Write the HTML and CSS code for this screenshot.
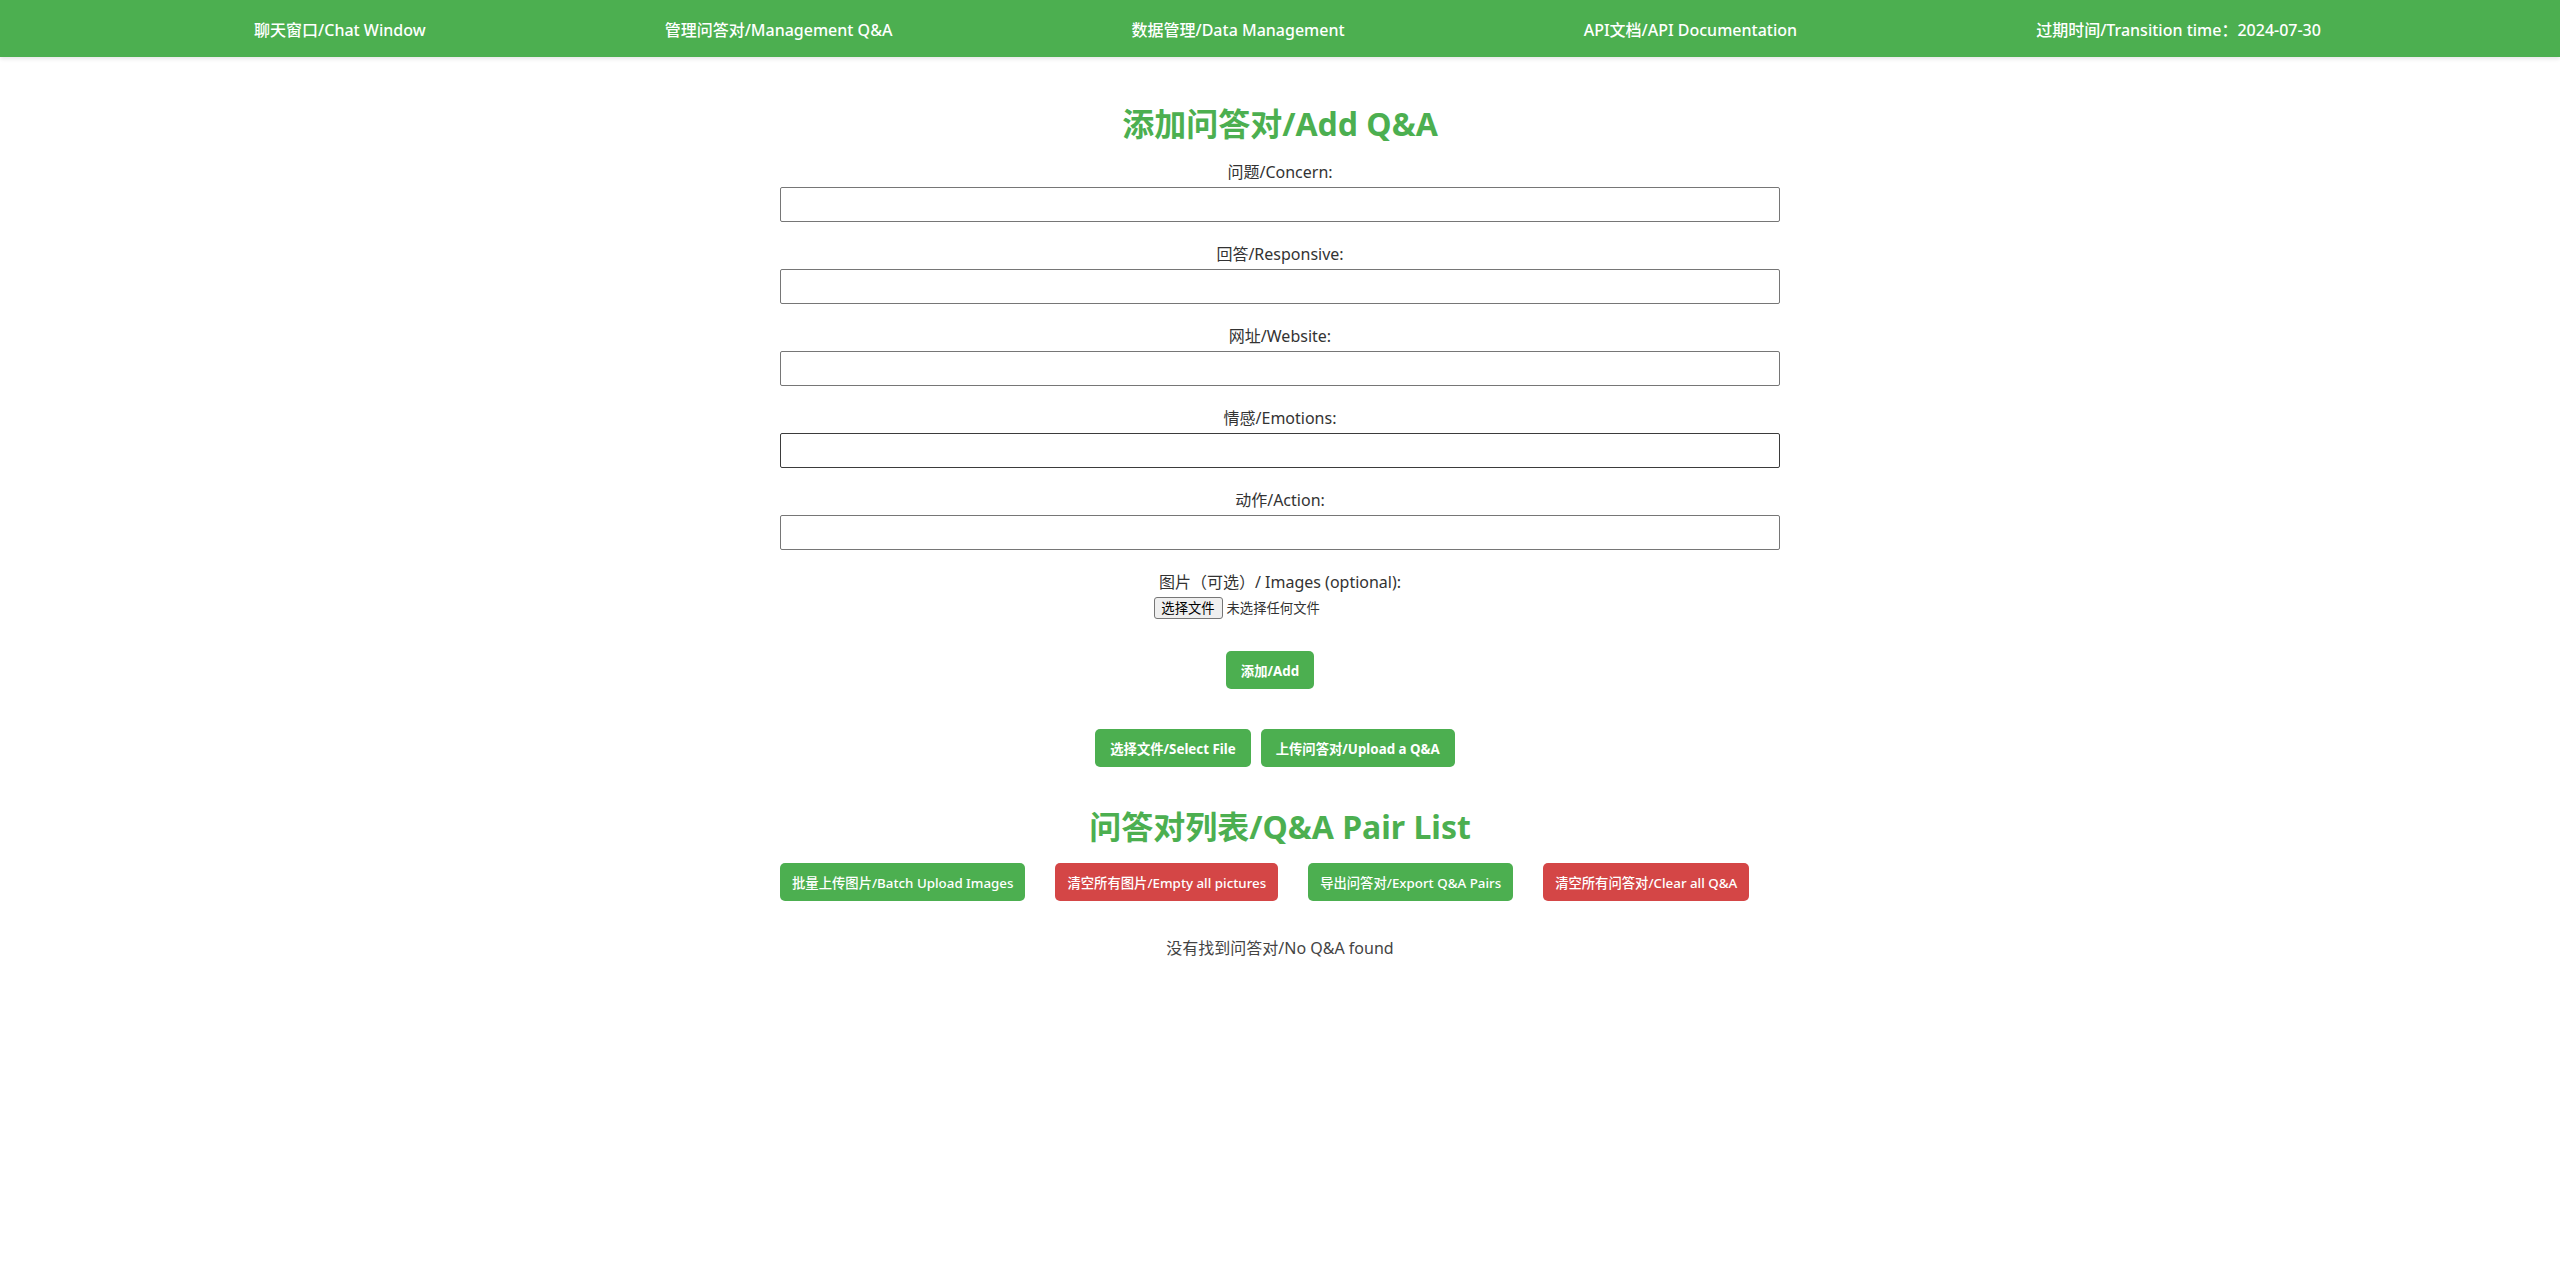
FILE: index.html
```html
<!DOCTYPE html>
<html lang="zh">
<head>
<meta charset="utf-8">
<title>管理问答对</title>
<link rel="stylesheet" href="styles.css">
</head>
<body>
<nav class="nav">
  <a class="nav-link" href="#">聊天窗口/Chat Window</a>
  <a class="nav-link" href="#">管理问答对/Management Q&amp;A</a>
  <a class="nav-link" href="#">数据管理/Data Management</a>
  <a class="nav-link" href="#">API文档/API Documentation</a>
  <span class="nav-link">过期时间/Transition time：2024-07-30</span>
</nav>
<main class="main">
  <h1 class="title">添加问答对/Add Q&amp;A</h1>
  <form class="form">
    <div class="field">
      <label class="label">问题/Concern:</label>
      <input class="input" type="text">
    </div>
    <div class="field">
      <label class="label">回答/Responsive:</label>
      <input class="input" type="text">
    </div>
    <div class="field">
      <label class="label">网址/Website:</label>
      <input class="input" type="text">
    </div>
    <div class="field">
      <label class="label">情感/Emotions:</label>
      <input class="input input-hover" type="text">
    </div>
    <div class="field">
      <label class="label">动作/Action:</label>
      <input class="input" type="text">
    </div>
    <div class="field">
      <label class="label">图片（可选）/ Images (optional):</label>
      <div class="file-row">
        <div class="file-widget">
          <span class="file-btn">选择文件</span>
          <span class="file-text">未选择任何文件</span>
        </div>
      </div>
    </div>
  </form>
  <div class="row row-add">
    <button class="btn" type="button">添加/Add</button>
  </div>
  <div class="row row-upload">
    <button class="btn" type="button">选择文件/Select File</button>
    <button class="btn" type="button">上传问答对/Upload a Q&amp;A</button>
  </div>
  <h1 class="title title-list">问答对列表/Q&amp;A Pair List</h1>
  <div class="row row-actions">
    <button class="btn btn-action" type="button">批量上传图片/Batch Upload Images</button>
    <button class="btn btn-action btn-red" type="button">清空所有图片/Empty all pictures</button>
    <button class="btn btn-action" type="button">导出问答对/Export Q&amp;A Pairs</button>
    <button class="btn btn-action btn-red" type="button">清空所有问答对/Clear all Q&amp;A</button>
  </div>
  <p class="empty">没有找到问答对/No Q&amp;A found</p>
</main>
</body>
</html>
```

FILE: styles.css
```css
body {
  margin: 0;
  font-family: "Noto Sans", "Noto Sans CJK SC", sans-serif;
  color: #333;
  background: #fff;
}

.nav {
  height: 57px;
  background: #4CAF50;
  display: flex;
  justify-content: space-evenly;
  align-items: center;
  box-shadow: 0 2px 4px rgba(0, 0, 0, 0.1);
  padding: 2px 0 0 15px;
  box-sizing: border-box;
}

.nav-link {
  color: #fff;
  text-decoration: none;
  font-size: 16px;
  line-height: 20px;
  font-weight: 500;
  white-space: nowrap;
}

.main {
  width: 1000px;
  margin: 0 auto;
}

.title {
  margin: 47px 0 0;
  font-size: 32px;
  line-height: 40px;
  text-align: center;
  color: #4CAF50;
  font-weight: 700;
}

.form {
  display: flex;
  flex-direction: column;
  gap: 22px;
  margin: 18px 0 0;
}

.field {
  display: flex;
  flex-direction: column;
}

.label {
  text-align: center;
  font-size: 16px;
  line-height: 20px;
  margin-bottom: 5px;
  color: #333;
}

.input {
  height: 35px;
  box-sizing: border-box;
  border: 1px solid #767676;
  border-radius: 2px;
  margin: 0;
  padding: 0 4px;
}

.input-hover {
  border-color: #3b3b3b;
}

.file-row {
  display: flex;
  justify-content: center;
}

.file-widget {
  width: 253px;
  display: flex;
  align-items: center;
  gap: 4px;
  font-size: 13.33px;
}

.file-btn {
  height: 22px;
  box-sizing: border-box;
  width: 69px;
  display: flex;
  align-items: center;
  justify-content: center;
  border: 1px solid #767676;
  border-radius: 3px;
  background: #efefef;
  color: #000;
  line-height: 18px;
}

.file-text {
  color: #333;
  line-height: 18px;
}

.row {
  display: flex;
}

.row-add {
  justify-content: center;
  margin-top: 32px;
  padding-right: 20px;
}

.row-upload {
  justify-content: center;
  gap: 10px;
  margin-top: 40px;
  padding-right: 10px;
}

.title-list {
  margin-top: 40px;
}

.row-actions {
  justify-content: flex-start;
  gap: 30px;
  margin-top: 16px;
}

.btn {
  height: 38px;
  padding: 0 15px;
  border: none;
  border-radius: 5px;
  background: #4CAF50;
  color: #fff;
  font-family: "Noto Sans", "Noto Sans CJK SC", sans-serif;
  font-size: 13.33px;
  font-weight: 700;
  white-space: nowrap;
  flex-shrink: 0;
  cursor: pointer;
}

.btn-action {
  font-weight: 500;
  padding: 0 12px;
}

.btn-red {
  background: #d44646;
}

.empty {
  margin: 37px 0 0;
  text-align: center;
  font-size: 16px;
  line-height: 20px;
  color: #444;
}
```
